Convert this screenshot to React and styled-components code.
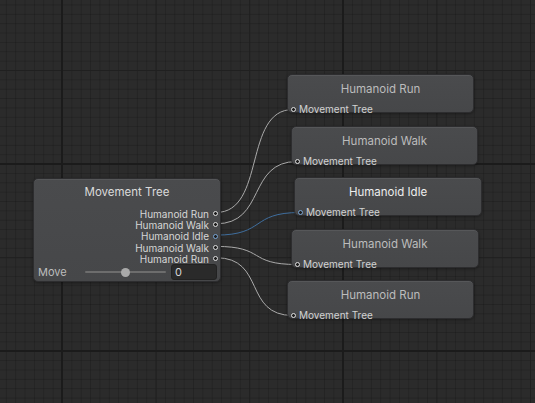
import React from 'react'
import styled, { createGlobalStyle } from 'styled-components'

const GlobalStyle = createGlobalStyle`
  html, body {
    margin: 0;
    padding: 0;
    background: #2a2a2a;
    overflow: hidden;
  }
  body {
    font-family: Inter, "DejaVu Sans", sans-serif;
  }
`

// grid canvas of the graph view
const Canvas = styled.div`
  position: relative;
  width: 535px;
  height: 403px;
  overflow: hidden;
  background-color: #2b2b2b;
  background-image:
    linear-gradient(#1b1b1b, #1b1b1b),
    linear-gradient(#1b1b1b, #1b1b1b),
    linear-gradient(#1b1b1b, #1b1b1b),
    linear-gradient(#1b1b1b, #1b1b1b),
    linear-gradient(to right, #202020 1px, transparent 1px),
    linear-gradient(to bottom, #202020 1px, transparent 1px),
    linear-gradient(to right, rgba(0, 0, 0, 0.16) 1px, transparent 1px),
    linear-gradient(to bottom, rgba(0, 0, 0, 0.16) 1px, transparent 1px);
  background-size:
    2px 100%,
    2px 100%,
    100% 2px,
    100% 2px,
    93.6px 93.6px,
    93.6px 93.6px,
    9.36px 9.36px,
    9.36px 9.36px;
  background-position:
    61px 0,
    342px 0,
    0 163px,
    0 350px,
    62px 70px,
    62px 70px,
    62px 70px,
    62px 70px;
  background-repeat: no-repeat, no-repeat, no-repeat, no-repeat, repeat, repeat, repeat, repeat;
`

const Wires = styled.svg`
  position: absolute;
  left: 0;
  top: 0;
  width: 535px;
  height: 403px;
`

const Node = styled.div`
  position: absolute;
  box-sizing: border-box;
  display: flex;
  flex-direction: column;
  background: linear-gradient(#4a4b4d, #464749);
  border: 1px solid #2d2d2f;
  border-radius: 5px;
  box-shadow: inset 0 1px 0 rgba(255, 255, 255, 0.07), 0 1px 3px rgba(0, 0, 0, 0.35);
`

const Title = styled.div`
  height: ${p => p.$h}px;
  line-height: ${p => p.$h}px;
  text-align: center;
  font-size: 11.5px;
  color: ${p => p.$color};
`

const InPort = styled.div`
  display: flex;
  align-items: center;
  gap: 3px;
  height: 10px;
  padding-left: 3px;
  font-size: 10px;
  line-height: 12px;
  color: #d2d2d2;
  white-space: nowrap;
`

const Dot = styled.span`
  box-sizing: border-box;
  width: 5px;
  height: 5px;
  flex: none;
  border-radius: 50%;
  background: #1e1e1e;
  border: 1.2px solid ${p => (p.$blue ? '#7aa6d6' : '#e0e0e0')};
`

const OutPorts = styled.div`
  display: flex;
  flex-direction: column;
  margin-top: 3px;
`

const OutPort = styled.div`
  display: flex;
  align-items: center;
  justify-content: flex-end;
  gap: 4px;
  height: 11.3px;
  padding-right: 2px;
  font-size: 10px;
  color: #d6d6d6;
  white-space: nowrap;
`

const ParamRow = styled.div`
  display: flex;
  align-items: center;
  height: 16px;
  padding: 0 3px 0 4px;
`

const ParamLabel = styled.span`
  width: 47px;
  font-size: 11px;
  color: #bdbdbd;
`

const Slider = styled.div`
  position: relative;
  width: 81px;
  height: 16px;
  display: flex;
  align-items: center;
`

const Track = styled.div`
  width: 100%;
  height: 2px;
  border-radius: 1px;
  background: #6d6d6d;
`

const Thumb = styled.div`
  position: absolute;
  top: 50%;
  width: 9px;
  height: 9px;
  margin: -4.5px 0 0 -4.5px;
  border-radius: 50%;
  background: #a9a9a9;
`

const NumberField = styled.div`
  box-sizing: border-box;
  margin-left: auto;
  width: 46px;
  height: 16px;
  padding-left: 3px;
  line-height: 15px;
  font-size: 11px;
  color: #d6d6d6;
  background: #2a2a2a;
  border: 1px solid #222;
  border-radius: 3px;
`

const children = [
  { title: 'Humanoid Run', x: 287, y: 74, w: 187 },
  { title: 'Humanoid Walk', x: 291, y: 126, w: 187 },
  { title: 'Humanoid Idle', x: 294, y: 177, w: 188, active: true },
  { title: 'Humanoid Walk', x: 291, y: 229, w: 188 },
  { title: 'Humanoid Run', x: 287, y: 280, w: 187 },
]

const outY = [212.5, 223.8, 235.1, 246.4, 257.7]

const wire = (x1, y1, x2, y2) =>
  `M${x1} ${y1} C${x1 + 50} ${y1} ${x2 - 50} ${y2} ${x2} ${y2}`

const App = () => {
  const value = 0.5

  return (
    <>
      <GlobalStyle />
      <Canvas>
        <Wires viewBox="0 0 535 403">
          {children.map((c, i) => (
            <path
              key={i}
              d={wire(216, outY[i], c.x + 6, c.y + 35.5)}
              fill="none"
              stroke={c.active ? '#3f6e9e' : '#aaaaaa'}
              strokeWidth="1"
            />
          ))}
        </Wires>

        <Node style={{ left: 33, top: 178, width: 188, height: 104 }}>
          <Title $h={26} $color="#dadada">Movement Tree</Title>
          <OutPorts>
            {children.map((c, i) => (
              <OutPort key={i}>
                {c.title}
                <Dot $blue={c.active} />
              </OutPort>
            ))}
          </OutPorts>
          <ParamRow>
            <ParamLabel>Move</ParamLabel>
            <Slider>
              <Track />
              <Thumb style={{ left: `${value * 100}%` }} />
            </Slider>
            <NumberField>0</NumberField>
          </ParamRow>
        </Node>

        {children.map((c, i) => (
          <Node key={i} style={{ left: c.x, top: c.y, width: c.w, height: 39 }}>
            <Title $h={29} $color={c.active ? '#ededed' : '#bcbcbc'}>{c.title}</Title>
            <InPort>
              <Dot $blue={c.active} />
              Movement Tree
            </InPort>
          </Node>
        ))}
      </Canvas>
    </>
  )
}

export default App
